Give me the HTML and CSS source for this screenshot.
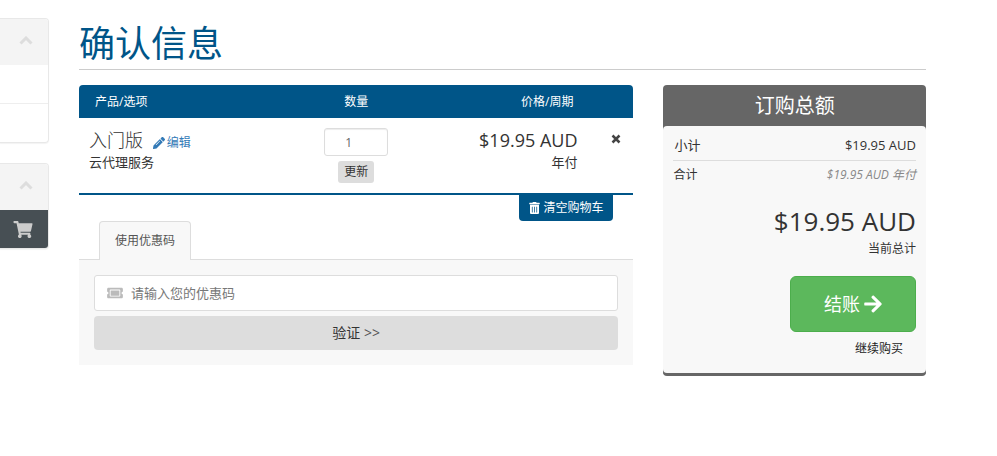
FILE: index.html
```html
<!DOCTYPE html>
<html lang="zh-CN">
<head>
<meta charset="utf-8">
<title>确认信息</title>
<link rel="stylesheet" href="styles.css">
</head>
<body>
<div class="page">
  <aside class="sidebar">
    <section class="panel">
      <div class="panel-head"><svg class="chevron" viewBox="0 0 14 9"><path d="M1.500 7.500L7 2L12.500 7.500"/></svg></div>
      <div class="panel-item"></div>
      <div class="panel-item"></div>
    </section>
    <section class="panel">
      <div class="panel-head"><svg class="chevron" viewBox="0 0 14 9"><path d="M1.500 7.500L7 2L12.500 7.500"/></svg></div>
      <a class="panel-cart" href="#" aria-label="购物车"><svg class="cart-icon" viewBox="0 0 576 512"><path d="M528.120 301.319l47.273-208C578.806 78.301 567.391 64 551.990 64H159.208l-9.166-44.810C147.758 8.021 137.930 0 126.529 0H24C10.745 0 0 10.745 0 24v16c0 13.255 10.745 24 24 24h69.883l70.248 343.435C147.325 417.100 136 435.222 136 456c0 30.928 25.072 56 56 56s56-25.072 56-56c0-15.674-6.447-29.835-16.824-40h209.647C430.447 426.165 424 440.326 424 456c0 30.928 25.072 56 56 56s56-25.072 56-56c0-22.172-12.888-41.332-31.579-50.405l5.517-24.276c3.413-15.018-8.002-29.319-23.403-29.319H218.117l-6.545-32h293.145c11.206 0 20.920-7.754 23.403-18.681z"/></svg></a>
    </section>
  </aside>

  <main class="main">
    <h1 class="title">确认信息</h1>
    <div class="columns">
      <div class="cart">
        <div class="cart-head">
          <span>产品/选项</span>
          <span class="center">数量</span>
          <span class="head-price">价格/周期</span>
        </div>
        <div class="cart-item">
          <div>
            <div class="item-name">入门版 <a class="edit" href="#"><svg class="pencil" viewBox="0 0 512 512"><path d="M497.900 142.100l-46.100 46.100c-4.700 4.700-12.300 4.700-17 0l-111-111c-4.700-4.700-4.700-12.300 0-17l46.100-46.100c18.700-18.700 49.100-18.700 67.900 0l60.100 60.100c18.800 18.700 18.800 49.100 0 68zM284.200 99.800L21.600 362.400.400 483.900c-2.900 16.400 11.400 30.600 27.800 27.800l121.500-21.300 262.600-262.600c4.700-4.700 4.700-12.300 0-17l-111-111c-4.800-4.700-12.400-4.700-17.100 0zM124.100 339.900c-5.500-5.500-5.500-14.300 0-19.800l154-154c5.500-5.500 14.300-5.500 19.800 0s5.500 14.300 0 19.800l-154 154c-5.500 5.500-14.300 5.500-19.800 0z"/></svg>编辑</a></div>
            <div class="item-note">云代理服务</div>
          </div>
          <div class="item-qty">
            <input class="qty" type="text" value="1" aria-label="数量">
            <button class="update" type="button">更新</button>
          </div>
          <div class="item-price">
            <div class="price">$19.95 AUD</div>
            <div class="item-note">年付</div>
          </div>
          <button class="remove" type="button" aria-label="删除"><svg class="times" viewBox="0 0 10 10"><path d="M1.500 1.500L8.500 8.500M8.500 1.500L1.500 8.500"/></svg></button>
        </div>
        <div class="empty-row"><button class="empty" type="button"><svg class="trash" viewBox="0 0 448 512"><path fill-rule="evenodd" d="M32 464a48 48 0 0 0 48 48h288a48 48 0 0 0 48-48V112H32zM304 208a16 16 0 0 1 32 0v224a16 16 0 0 1-32 0zM208 208a16 16 0 0 1 32 0v224a16 16 0 0 1-32 0zM112 208a16 16 0 0 1 32 0v224a16 16 0 0 1-32 0zM432 32H312l-9.400-18.700A24 24 0 0 0 281.100 0H166.800a23.720 23.720 0 0 0-21.400 13.300L136 32H16A16 16 0 0 0 0 48v32a16 16 0 0 0 16 16h416a16 16 0 0 0 16-16V48a16 16 0 0 0-16-16z"/></svg>清空购物车</button></div>
        <div class="tabs"><a class="tab" href="#promo">使用优惠码</a></div>
        <form class="promo" id="promo">
          <label class="promo-field">
            <svg class="ticket" viewBox="0 0 576 512"><path d="M128 160h320v192H128V160zm400 96c0 26.510 21.490 48 48 48v96c0 26.510-21.490 48-48 48H48c-26.510 0-48-21.490-48-48v-96c26.510 0 48-21.490 48-48s-21.490-48-48-48v-96c0-26.510 21.490-48 48-48h480c26.510 0 48 21.490 48 48v96c-26.510 0-48 21.490-48 48zm-48-104c0-13.255-10.745-24-24-24H120c-13.255 0-24 10.745-24 24v208c0 13.255 10.745 24 24 24h336c13.255 0 24-10.745 24-24V152z"/></svg>
            <input class="promo-input" type="text" placeholder="请输入您的优惠码" aria-label="优惠码">
          </label>
          <button class="validate" type="button">验证 <span class="arrows">&gt;&gt;</span></button>
        </form>
      </div>

      <section class="summary">
        <h2 class="summary-title">订购总额</h2>
        <div class="summary-body">
          <div class="subtotal"><span>小计</span><span>$19.95 AUD</span></div>
          <div class="recurring"><span>合计</span><em>$19.95 AUD 年付</em></div>
          <div class="total">$19.95 AUD</div>
          <div class="total-note">当前总计</div>
          <div class="actions">
            <button class="checkout" type="button">结账<svg class="arrow" viewBox="0 0 448 512"><path d="M190.500 66.900l22.200-22.200c9.400-9.400 24.600-9.400 33.900 0L441 239c9.400 9.400 9.400 24.600 0 33.900L246.600 467.300c-9.400 9.400-24.600 9.400-33.900 0l-22.200-22.200c-9.500-9.500-9.300-25 .400-34.300L311.400 296H24c-13.300 0-24-10.700-24-24v-32c0-13.300 10.700-24 24-24h287.400L190.900 101.200c-9.800-9.300-10-24.800-.4-34.300z"/></svg></button>
            <a class="continue" href="#">继续购买</a>
          </div>
        </div>
      </section>
    </div>
  </main>
</div>
</body>
</html>
```
FILE: styles.css
```css
* { box-sizing: border-box; }

body {
  margin: 0;
  background: #fff;
  color: #333;
  font: 12px/20px "Open Sans", "Noto Sans CJK SC", sans-serif;
}

button, input { font: inherit; color: inherit; margin: 0; }
button { border: 0; cursor: pointer; }
a { text-decoration: none; }
svg { fill: currentColor; flex: none; }

.page { display: flex; gap: 30px; padding: 18px 71px 18px 0; }

/* Sidebar */
.sidebar { flex: 0 0 49px; display: flex; flex-direction: column; gap: 20px; }
.panel {
  border: 1px solid #e8e8e8;
  border-left: 0;
  border-radius: 0 4px 4px 0;
  box-shadow: 0 1px 1px rgba(0, 0, 0, .05);
  overflow: hidden;
}
.panel-head {
  display: flex;
  align-items: center;
  justify-content: flex-end;
  height: 46px;
  padding-right: 15px;
  padding-bottom: 4px;
  background: #f4f4f4;
}
.panel-item { height: 38px; }
.panel-item + .panel-item { height: 39px; border-top: 1px solid #eee; }
.chevron { width: 14px; height: 9px; fill: none; stroke: #ddd; stroke-width: 3; }
.panel-cart {
  display: flex;
  align-items: center;
  justify-content: flex-end;
  height: 38px;
  padding-right: 15px;
  background: #474f54;
  color: #ccc;
}
.cart-icon { width: 20px; height: 17px; }

/* Heading */
.main { flex: 1; min-width: 0; }
.title {
  margin: 0 0 15px;
  height: 52px;
  border-bottom: 1px solid #ccc;
  color: #058;
  font-size: 36px;
  font-weight: 400;
  line-height: 52px;
}
.columns {
  display: grid;
  grid-template-columns: minmax(0, 19fr) minmax(0, 9fr);
  gap: 30px;
  align-items: start;
}

/* Cart */
.cart-head, .cart-item { display: grid; grid-template-columns: 43fr 14fr 34fr 9fr; }
.cart-head {
  padding: 7px 0 6px;
  background: #058;
  border-radius: 4px 4px 0 0;
  color: #fff;
}
.cart-head > :first-child { padding-left: 16px; }
.center { text-align: center; }
.head-price { text-align: right; padding-right: 10px; }
.cart-item { padding: 10px 0; border-bottom: 2px solid #058; }
.cart-item > :first-child { padding-left: 10px; }
.item-name, .price { height: 24px; font-size: 18px; line-height: 24px; }
.item-name { font-weight: 300; }
.item-note { font-size: 13px; line-height: 20px; }
.edit { margin-left: 5px; color: #337ab7; font-size: 12px; font-weight: 400; }
.pencil { width: 12px; height: 12px; margin-right: 2px; vertical-align: -2px; }
.item-qty { display: flex; flex-direction: column; align-items: center; gap: 5px; }
.qty {
  width: 64px;
  height: 28px;
  padding: 0 0 0 20px;
  border: 1px solid #ddd;
  border-radius: 3px;
  box-shadow: inset 0 1px 1px rgba(0, 0, 0, .075);
  color: #666;
}
.update { height: 22px; padding: 0 6px; border-radius: 3px; background: #ddd; }
.item-price { padding-right: 6px; text-align: right; }
.remove {
  align-self: start;
  justify-self: end;
  height: 22px;
  padding: 0 12px;
  background: none;
}
.times { display: block; width: 10px; height: 10px; fill: none; stroke: #444; stroke-width: 2.500; }

.empty-row { display: flex; justify-content: flex-end; padding-right: 20px; }
.empty {
  display: flex;
  align-items: center;
  gap: 3px;
  height: 26px;
  padding: 0 10px;
  border-radius: 0 0 4px 4px;
  background: #058;
  color: #fff;
}
.trash { width: 11px; height: 12px; }

/* Promo code */
.tabs { display: flex; padding-left: 20px; border-bottom: 1px solid #ddd; }
.tab {
  margin-bottom: -1px;
  padding: 9px 15px;
  border: 1px solid #ddd;
  border-bottom: 0;
  border-radius: 4px 4px 0 0;
  background: #f8f8f8;
  color: #555;
}
.promo { padding: 15px; background: #f8f8f8; }
.promo-field {
  display: flex;
  align-items: center;
  gap: 8px;
  height: 36px;
  margin-bottom: 5px;
  padding: 0 12px;
  border: 1px solid #ddd;
  border-radius: 3px;
  background: #fff;
}
.ticket { width: 16px; height: 14px; color: #bbb; }
.promo-input {
  flex: 1;
  min-width: 0;
  padding: 0;
  border: 0;
  outline: 0;
  background: none;
  font-size: 13px;
}
.promo-input::placeholder { color: #777; opacity: 1; }
.validate {
  width: 100%;
  height: 34px;
  padding: 0;
  border-radius: 4px;
  background: #ddd;
  font-size: 14px;
}
.arrows { color: #555; }

/* Summary */
.summary { border-bottom: 3px solid #666; border-radius: 4px; background: #666; }
.summary-title {
  margin: 0;
  color: #fff;
  font-size: 20px;
  font-weight: 400;
  line-height: 41px;
  text-align: center;
}
.summary-body { padding: 9px 10px 14px; border-radius: 4px; background: #f8f8f8; }
.subtotal, .recurring { display: flex; justify-content: space-between; }
.subtotal { padding: 0 0 5px 1px; border-bottom: 1px solid #ddd; font-size: 13px; }
.recurring { padding-top: 4px; }
.recurring em { color: #888; }
.total { margin-top: 18px; text-align: right; font-size: 26px; line-height: 36px; }
.total-note { text-align: right; line-height: 20px; }
.actions { display: flex; flex-direction: column; align-items: flex-end; margin-top: 17px; }
.checkout {
  display: flex;
  align-items: center;
  justify-content: center;
  gap: 4px;
  height: 56px;
  padding: 0 33px;
  border: 1px solid #4cae4c;
  border-radius: 6px;
  background: #5cb85c;
  color: #fff;
  font-size: 18px;
}
.arrow { width: 18px; height: 20px; }
.continue { margin-top: 7px; padding-right: 13px; color: #222; }
```
